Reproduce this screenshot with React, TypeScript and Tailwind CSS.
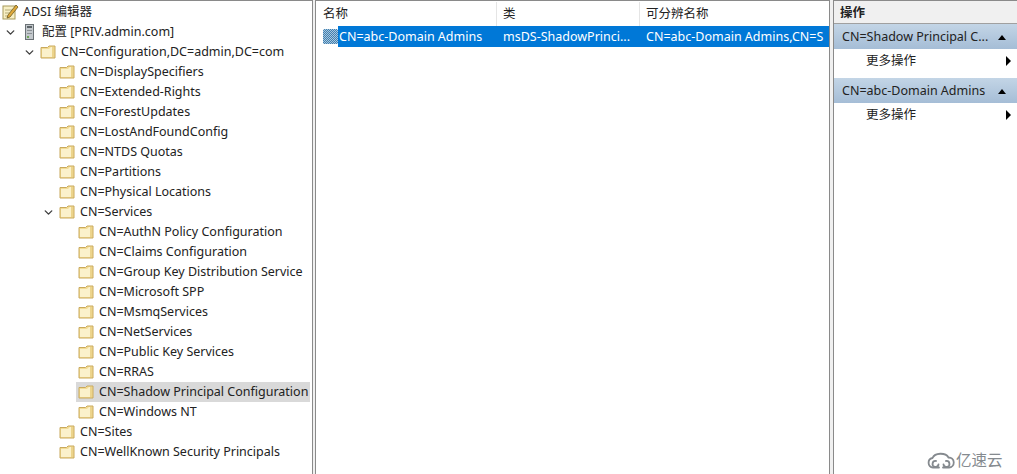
import { ChevronDown } from "lucide-react";

type TreeRow = {
  label: string;
  depth: number;
  open?: boolean;
  selected?: boolean;
};

const rows: TreeRow[] = [
  { label: "CN=Configuration,DC=admin,DC=com", depth: 2, open: true },
  { label: "CN=DisplaySpecifiers", depth: 3 },
  { label: "CN=Extended-Rights", depth: 3 },
  { label: "CN=ForestUpdates", depth: 3 },
  { label: "CN=LostAndFoundConfig", depth: 3 },
  { label: "CN=NTDS Quotas", depth: 3 },
  { label: "CN=Partitions", depth: 3 },
  { label: "CN=Physical Locations", depth: 3 },
  { label: "CN=Services", depth: 3, open: true },
  { label: "CN=AuthN Policy Configuration", depth: 4 },
  { label: "CN=Claims Configuration", depth: 4 },
  { label: "CN=Group Key Distribution Service", depth: 4 },
  { label: "CN=Microsoft SPP", depth: 4 },
  { label: "CN=MsmqServices", depth: 4 },
  { label: "CN=NetServices", depth: 4 },
  { label: "CN=Public Key Services", depth: 4 },
  { label: "CN=RRAS", depth: 4 },
  { label: "CN=Shadow Principal Configuration", depth: 4, selected: true },
  { label: "CN=Windows NT", depth: 4 },
  { label: "CN=Sites", depth: 3 },
  { label: "CN=WellKnown Security Principals", depth: 3 },
];

const indent: Record<number, string> = {
  2: "pl-[23px]",
  3: "pl-[42px]",
  4: "pl-[61px]",
};

const FolderIcon = () => (
  <svg width="16" height="14" viewBox="0 0 16 14" className="shrink-0">
    <path d="M1 2.5 L1 13 L15 13 L15 1 L9 1 L7.5 2.5 Z" fill="#f3dc94" stroke="#c9a95c" strokeWidth="1" />
    <path d="M2 4 L9 4 L11 2 L14 2 L14 12 L2 12 Z" fill="#fbf1cb" />
    <path d="M12 2 L14 2 L14 12 L12 12 Z" fill="#ecd48c" />
  </svg>
);

const Chevron = () => (
  <ChevronDown size={13} strokeWidth={2.6} className="w-[13px] shrink-0 text-[#404040]" />
);

const EditorIcon = () => (
  <svg width="18" height="18" viewBox="0 0 18 18" className="shrink-0">
    <rect x="2" y="3" width="12" height="13" fill="#f7efc4" stroke="#a89a5a" />
    <path d="M4 7h7M4 10h5M4 13h4" stroke="#b5ab78" />
    <path d="M7 12 L15 2 L17 4 L9 14 L6 15 Z" fill="#e0a93a" stroke="#6e5a22" strokeWidth="0.8" />
  </svg>
);

const ServerIcon = () => (
  <svg width="9" height="16" viewBox="0 0 9 16" className="shrink-0">
    <rect x="0.5" y="0.5" width="8" height="15" fill="#c3c8cc" stroke="#6b7276" />
    <rect x="2" y="2" width="5" height="2" fill="#5d6468" />
    <rect x="2" y="6" width="5" height="1" fill="#8a9094" />
    <rect x="2" y="9" width="5" height="1" fill="#8a9094" />
    <rect x="2" y="12" width="2" height="2" fill="#6ea55a" />
  </svg>
);

const GroupIcon = () => (
  <svg width="15" height="15" viewBox="0 0 15 15" className="shrink-0">
    <defs>
      <pattern id="dots" width="2" height="2" patternUnits="userSpaceOnUse">
        <rect width="2" height="2" fill="#3f7fb2" />
        <rect width="1" height="1" fill="#a9c7dc" />
        <rect x="1" y="1" width="1" height="1" fill="#a9c7dc" />
      </pattern>
    </defs>
    <rect width="15" height="15" rx="1.5" fill="url(#dots)" />
  </svg>
);

const ActionHeader = ({ title }: { title: string }) => (
  <div className="flex h-[25px] items-center justify-between bg-gradient-to-b from-[#c3d5e6] to-[#a5bdd6] pl-[8px] pr-[11px]">
    <span className="whitespace-nowrap pt-[2px]">{title}</span>
    <span className="mt-[1px] h-0 w-0 border-x-[4px] border-b-[5px] border-x-transparent border-b-black" />
  </div>
);

const ActionItem = () => (
  <div className="flex h-[29px] items-center justify-between pb-[4px] pl-[32px] pr-[6px]">
    <span>更多操作</span>
    <span className="mb-[2px] h-0 w-0 border-y-[5px] border-l-[5px] border-y-transparent border-l-black" />
  </div>
);

const App = () => {
  return (
    <div className="relative flex h-[474px] w-[1017px] overflow-hidden bg-white font-['Noto_Sans','Noto_Sans_CJK_SC',sans-serif] text-[12.5px] leading-none text-[#222222]">
      {/* tree */}
      <aside className="flex w-[312px] shrink-0 flex-col border-t border-[#8a8a8a] pt-[1px]">
        <div className="flex h-[20px] items-center gap-[4px] pl-[1px]">
          <EditorIcon />
          <span>ADSI 编辑器</span>
        </div>
        <div className="flex h-[20px] items-center pl-[4px]">
          <Chevron />
          <span className="ml-[8px]">
            <ServerIcon />
          </span>
          <span className="ml-[8px] whitespace-nowrap">配置 [PRIV.admin.com]</span>
        </div>
        {rows.map((row) => (
          <div key={row.label} className={`flex h-[20px] items-center pr-[2px] ${indent[row.depth]}`}>
            <span className="flex w-[16px] shrink-0 justify-start">{row.open ? <Chevron /> : null}</span>
            <div
              className={`-ml-[1px] flex h-[20px] flex-1 items-center gap-[5px] whitespace-nowrap pl-[2px] ${
                row.selected ? "bg-[#d9d9d9]" : ""
              }`}
            >
              <FolderIcon />
              <span>{row.label}</span>
            </div>
          </div>
        ))}
      </aside>

      <div className="w-[4px] shrink-0 border-x border-[#8a8a8a] bg-[#f0f0f0]" />

      {/* list */}
      <main className="flex min-w-0 flex-1 flex-col border-t border-[#8a8a8a]">
        <div className="flex h-[25px] items-center pt-[1px]">
          <div className="flex h-full w-[181px] items-center border-r border-[#e5e5e5] pl-[7px]">名称</div>
          <div className="flex h-full w-[143px] items-center border-r border-[#e5e5e5] pl-[6px]">类</div>
          <div className="flex h-full flex-1 items-center pl-[6px]">可分辨名称</div>
        </div>
        <div className="flex h-[21px] items-center pl-[7px]">
          <GroupIcon />
          <div className="flex h-full flex-1 items-center overflow-hidden whitespace-nowrap bg-[#0078d7] pt-[2px] text-white">
            <span className="w-[159px] shrink-0 pl-[1px]">CN=abc-Domain Admins</span>
            <span className="w-[143px] shrink-0 pl-[6px]">msDS-ShadowPrinci...</span>
            <span className="pl-[6px]">CN=abc-Domain Admins,CN=S</span>
          </div>
        </div>
      </main>

      <div className="w-[5px] shrink-0 border-x border-[#8a8a8a] bg-[#f0f0f0]" />

      {/* actions */}
      <section className="flex w-[183px] shrink-0 flex-col border-t border-[#8a8a8a]">
        <div className="flex h-[23px] items-center border-b border-[#a0a0a0] bg-[#f0f0f0] pl-[6px] pt-[2px] font-bold">操作</div>
        <ActionHeader title="CN=Shadow Principal C..." />
        <ActionItem />
        <ActionHeader title="CN=abc-Domain Admins" />
        <ActionItem />
      </section>

      {/* watermark */}
      <div className="absolute left-[927px] top-[452px] flex items-center gap-[1px] text-[15.5px] text-[#858a8f]">
        <svg width="28" height="17" viewBox="0 0 28 17" fill="none" stroke="#858a8f" strokeWidth="1.8" strokeLinecap="round">
          <path d="M12 15.5 H6 A4.8 4.8 0 0 1 5.5 6 A8.5 6 0 0 1 21.5 5.5 A5 5 0 0 1 22 15.5 H16" />
          <path d="M9 9 A3 3 0 1 0 11.5 12.5" />
          <path d="M19 9 A3 3 0 1 1 16.5 12.5" />
        </svg>
        <span>亿速云</span>
      </div>
    </div>
  );
};

export default App;
